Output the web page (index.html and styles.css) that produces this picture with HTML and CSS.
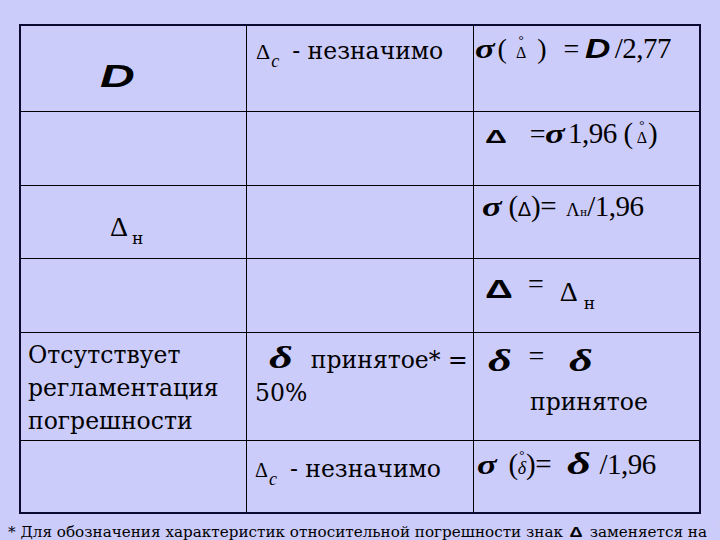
FILE: index.html
```html
<!DOCTYPE html>
<html lang="ru">
<head>
<meta charset="utf-8">
<link rel="stylesheet" href="styles.css">
</head>
<body>
<div class="page">
  <div class="grid">
    <div class="cell r1 c1"><span class="bigD">D</span></div>
    <div class="cell r1 c2"><span class="dl">Δ</span><span class="subc">c</span><span class="txt dash">- незначимо</span></div>
    <div class="cell r1 c3"><span class="sig">σ</span><span class="par lp">(</span><span class="ring"><span class="o">°</span><span class="sd">Δ</span></span><span class="par rp">)</span><span class="eq">=</span><span class="bD">D</span><span class="num">/2,77</span></div>

    <div class="cell r2 c1"></div>
    <div class="cell r2 c2"></div>
    <div class="cell r2 c3"><span class="bDelta">Δ</span><span class="eq eq2">=</span><span class="sig">σ</span><span class="num">1,96 (</span><span class="ring r2ring"><span class="o">°</span><span class="sd">Δ</span></span><span class="num">)</span></div>

    <div class="cell r3 c1"><span class="dn">Δ</span><span class="subn">н</span></div>
    <div class="cell r3 c2"></div>
    <div class="cell r3 c3"><span class="sig sig3">σ</span><span class="num">(</span><span class="tinyD">Δ</span><span class="num">)=</span><span class="lam">Λ<span class="lamn">н</span></span><span class="num">/1,96</span></div>

    <div class="cell r4 c1"></div>
    <div class="cell r4 c2"></div>
    <div class="cell r4 c3"><span class="bDelta big">Δ</span><span class="eq eqhigh">=</span><span class="dn dn2">Δ</span><span class="subn">н</span></div>

    <div class="cell r5 c1 txt">Отсутствует регламентация погрешности</div>
    <div class="cell r5 c2 txt"><span class="del">δ</span> принятое* = 50%</div>
    <div class="cell r5 c3"><div class="line"><span class="del">δ</span><span class="eq eq5">=</span><span class="del">δ</span></div><div class="txt prin">принятое</div></div>

    <div class="cell r6 c1"></div>
    <div class="cell r6 c2"><span class="dl dl6">Δ</span><span class="subc">c</span><span class="txt dash">- незначимо</span></div>
    <div class="cell r6 c3"><span class="sig sig6">σ</span><span class="num">(</span><span class="ring"><span class="o">°</span><span class="sdel">δ</span></span><span class="num">)=</span><span class="del del6">δ</span><span class="num">/1,96</span></div>
  </div>
  <p class="note">* Для обозначения характеристик относительной погрешности знак <span class="noteD">Δ</span> заменяется на <span class="noteDel">δ</span></p>
</div>
</body>
</html>
```

FILE: styles.css
```css
html, body {
  margin: 0;
  padding: 0;
  background: #ccccfb;
}
body {
  width: 720px;
  height: 540px;
  overflow: hidden;
  font-family: serif;
  color: #000;
}
.page {
  padding: 24px 0 0 19px;
}
.grid {
  display: grid;
  width: 678px;
  grid-template-columns: 225px 226px 225px;
  grid-template-rows: 85px 73px 72px 73px 107px 71px;
  gap: 1px;
  background: #000;
  border: 2px solid #0a0a30;
}
.cell {
  background: #ccccfb;
  font-family: serif;
  font-size: 28px;
  line-height: 33px;
  white-space: nowrap;
}
.txt {
  font-family: "DejaVu Serif", serif;
  font-size: 23.5px;
}
.r5.c1 { white-space: normal; padding: 6px 0 0 7px; }
.r5.c2 { white-space: normal; padding: 8px 0 0 8px; line-height: 33px; }

/* row 1 */
.r1.c1 { padding: 33px 0 0 79px; }
.bigD {
  display: inline-block;
  font: italic bold 31px "Liberation Sans", sans-serif;
  transform: scaleX(1.55);
  transform-origin: left center;
}
.r1.c2 { padding: 7px 0 0 9px; }
.dl { font-size: 22px; }
.subc {
  font-style: italic;
  font-size: 18px;
  vertical-align: -8px;
  margin-left: 1px;
}
.dash { margin-left: 13px; }
.r1.c3 { padding: 6px 0 0 1px; }

.sig {
  display: inline-block;
  font-family: serif;
  font-style: italic;
  font-weight: bold;
  font-size: 27px;
  transform: scaleX(1.35);
  transform-origin: left center;
  margin-right: 8px;
}
.sig3 { margin-right: 12px; }
.sig6 { margin-right: 17px; }
.par { font-size: 28px; }
.lp { margin-right: 9px; }
.rp { margin-left: 11px; }
.ring {
  display: inline-block;
  text-align: center;
  line-height: 1;
}
.r2ring { margin: 0 1px 0 4px; }
.o { display: block; font-size: 13px; height: 8px; line-height: 8px; }
.sd { display: block; font-size: 16px; line-height: 17px; }
.sdel { display: block; font-style: italic; font-size: 18px; line-height: 18px; }
.eq { font-size: 28px; margin: 0 6px 0 17px; }
.bD {
  display: inline-block;
  font: italic bold 27px "Liberation Sans", sans-serif;
  transform: scaleX(1.3);
  transform-origin: left center;
  margin-right: 10px;
}
.num { font-size: 29px; letter-spacing: -0.5px; }

/* row 2 */
.r2.c3 { padding: 5px 0 0 11px; }
.bDelta {
  display: inline-block;
  font: bold 19px "Liberation Sans", sans-serif;
  transform: scaleX(1.6);
  transform-origin: left center;
}
.bDelta.big { font-size: 25px; transform: scaleX(1.55); vertical-align: 3px; }
.eq2 { margin: 0 0 0 31px; }

/* row 3 */
.r3.c1 { padding: 24px 0 0 89px; }
.dn { font-size: 28px; }
.subn {
  font-family: "DejaVu Serif", serif;
  font-size: 17px;
  vertical-align: -8px;
  margin-left: 4px;
}
.r3.c3 { padding: 4px 0 0 8px; }
.tinyD { font: 20px "Liberation Sans", sans-serif; }
.lam { font-size: 19px; margin-left: 10px; }
.lamn { font-family: "DejaVu Serif", serif; font-size: 11px; }

/* row 4 */
.r4.c3 { padding: 8px 0 0 11px; }
.eqhigh { vertical-align: 8px; margin: 0 16px 0 25px; }
.dn2 { font-size: 28px; }
.r4 .subn { margin-left: 6px; }

/* row 5 */
.del {
  display: inline-block;
  font-family: serif;
  font-style: italic;
  font-weight: bold;
  font-size: 32px;
  transform: scaleX(1.45);
  transform-origin: left center;
}
.r5.c2 .del { margin: 0 18px 0 14px; }
.r5.c3 { padding: 6px 0 0 14px; }
.eq5 { vertical-align: 6px; margin: 0 25px 0 24px; }
.prin { padding-left: 42px; margin-top: 8px; }

/* row 6 */
.r6.c2 { padding: 10px 0 0 8px; }
.dl6 { font-size: 20px; }
.r6.c3 { padding: 6px 0 0 3px; }
.del6 { margin: 0 16px 0 16px; }

.note {
  margin: 2px 0 0 -11px;
  font-family: "DejaVu Serif", serif;
  font-size: 15.2px;
  line-height: 20px;
  white-space: nowrap;
}
.noteD {
  display: inline-block;
  font: bold 14px "Liberation Sans", sans-serif;
  margin: 0 4px 0 3px;
  transform: scaleX(1.3);
}
.noteDel {
  display: inline-block;
  font-family: serif;
  font-style: italic;
  font-weight: bold;
  font-size: 28px;
  transform: scaleX(1.3);
  margin-left: 10px;
  vertical-align: 7px;
  line-height: 10px;
}
```
